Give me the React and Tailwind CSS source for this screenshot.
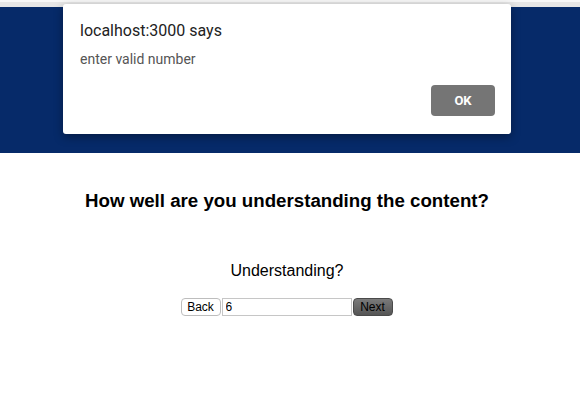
import React from "react";

export default function App() {
    return (
        <div className="relative w-[580px] h-[417px] bg-white overflow-hidden font-['Liberation_Sans',Arial,sans-serif]">
            <div className="h-[2px] bg-[#f7f7f7]" />
            <div className="h-[5px] bg-[#e6e6e6]" />
            <div className="h-[146px] bg-[#062a69]" />

            <div className="flex flex-col items-center pr-[6px]">
                <h1 className="mt-[37px] text-[18.7px] leading-[21px] font-bold text-black">
                    How well are you understanding the content?
                </h1>
                <p className="mt-[51px] text-[16px] leading-[18px] text-black">
                    Understanding?
                </p>
                <div className="mt-[18px] flex items-center ml-[-1px]">
                    <button className="w-[40px] h-[18px] rounded-[4px] border border-[#bdbdbd] bg-white text-[12px] leading-none text-black">
                        Back
                    </button>
                    <input
                        readOnly
                        value="6"
                        className="ml-[1px] w-[130px] h-[18px] border border-[#c6c6c6] px-[3px] text-[12px] text-black outline-none"
                    />
                    <button className="ml-[1px] w-[40px] h-[18px] rounded-[4px] border border-[#4a4a4a] bg-gradient-to-b from-[#7a7a7a] to-[#555] text-[12px] leading-none text-black">
                        Next
                    </button>
                </div>
            </div>

            <div className="absolute left-[63px] top-[4px] w-[448px] h-[130px] rounded-[3px] bg-white shadow-[0_3px_10px_rgba(0,0,0,0.35)] font-['Roboto','Noto_Sans',sans-serif]">
                <div className="pl-[17px] pt-[17px] text-[16px] leading-[19px] text-[#222]">
                    localhost:3000 says
                </div>
                <div className="pl-[17px] pt-[11px] text-[14px] leading-[17px] text-[#555]">
                    enter valid number
                </div>
                <div className="flex justify-end pr-[16px] pt-[17px]">
                    <button className="w-[64px] h-[31px] rounded-[4px] bg-[#757575] text-white text-[13px] font-bold">
                        OK
                    </button>
                </div>
            </div>
        </div>
    );
}
